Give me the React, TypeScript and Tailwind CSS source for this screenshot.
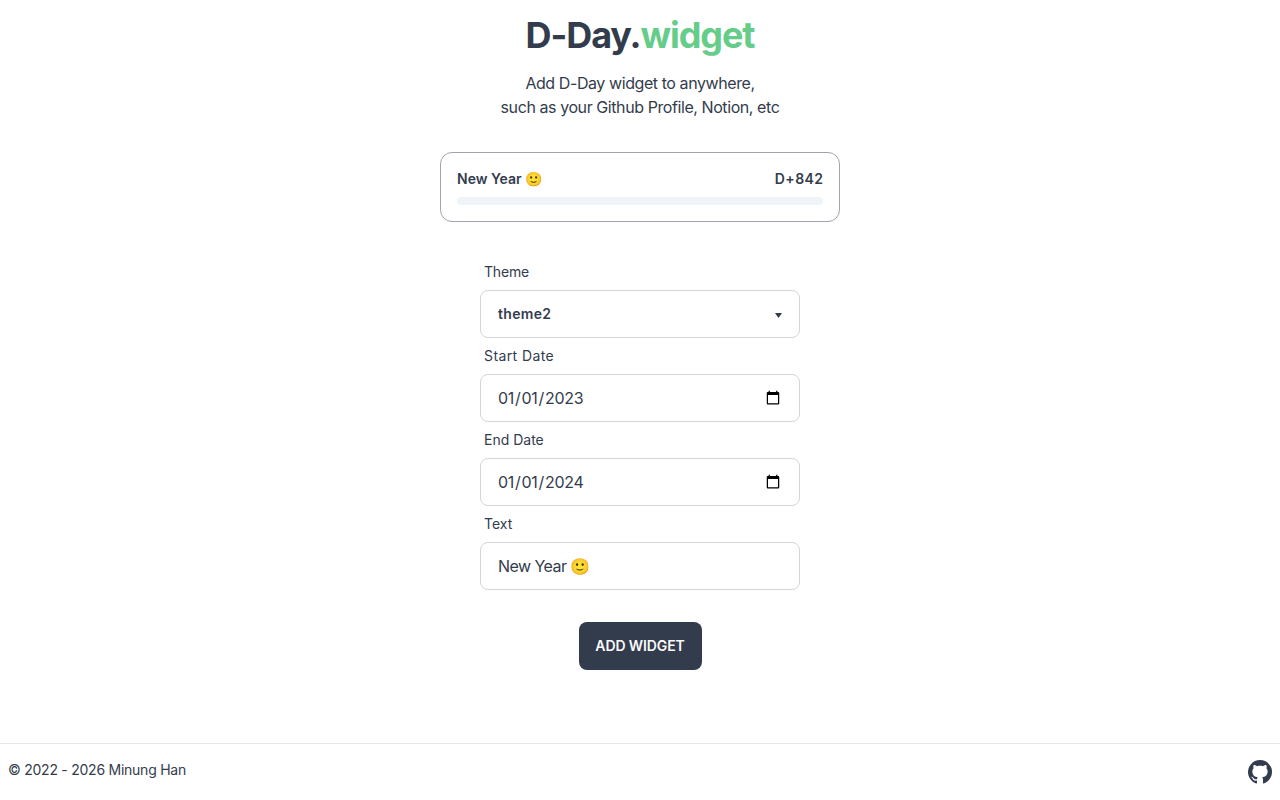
import React from 'react';

const fieldClass =
  'h-12 w-full rounded-lg border border-[#d4d5d8] bg-white pr-4 text-base text-[#333c4d] outline-none';

const Field: React.FC<{ label: string; labelClass?: string; children: React.ReactNode }> = ({
  label,
  labelClass = '',
  children,
}) => (
  <div className="flex flex-col">
    <label className={`px-1 py-2 text-sm leading-5 text-[#333c4d] ${labelClass}`}>{label}</label>
    {children}
  </div>
);

const App: React.FC = () => {
  return (
    <div className="flex h-screen flex-col bg-white font-['Inter','Noto_Color_Emoji',sans-serif] text-[#333c4d]">
      <main className="flex flex-1 flex-col items-center pt-[15px]">
        <h1 className="text-4xl font-bold leading-10 tracking-[-1.08px]">
          D-Day.<span className="text-[#66cc8a]">widget</span>
        </h1>
        <p className="mt-4 text-center text-base leading-6 tracking-[-0.42px]">
          Add D-Day widget to anywhere,
          <br />
          such as your Github Profile, Notion, etc
        </p>

        <div className="mt-[33px] flex h-[70px] w-[400px] flex-col rounded-xl border border-[#a0a3b1] px-4 pt-4">
          <div className="flex items-center justify-between text-sm font-semibold leading-5">
            <span>New Year 🙂</span>
            <span className="-mr-[0.4px] tracking-[0.4px]">D+842</span>
          </div>
          <div className="mt-2 h-2 w-full rounded-full bg-[#eff4f9]" />
        </div>

        <form className="mt-8 flex w-80 flex-col">
          <Field label="Theme" labelClass="tracking-[-0.2px]">
            <div className="relative">
              <select
                defaultValue="theme2"
                className={`${fieldClass} appearance-none pl-[17px] text-sm font-semibold tracking-[0.3px]`}
              >
                <option value="theme1">theme1</option>
                <option value="theme2">theme2</option>
              </select>
              <svg
                viewBox="0 0 7 5"
                className="pointer-events-none absolute right-[18px] top-[23px] h-[5px] w-[7px] text-[#333c4d]"
              >
                <path d="M0 0h7L3.5 5z" fill="currentColor" />
              </svg>
            </div>
          </Field>
          <Field label="Start Date" labelClass="tracking-[0.4px]">
            <input type="date" defaultValue="2023-01-01" className={`${fieldClass} pl-4 tracking-[-0.3px]`} />
          </Field>
          <Field label="End Date">
            <input type="date" defaultValue="2024-01-01" className={`${fieldClass} pl-4 tracking-[-0.3px]`} />
          </Field>
          <Field label="Text">
            <input type="text" defaultValue="New Year 🙂" className={`${fieldClass} pl-[17px] tracking-[-0.55px]`} />
          </Field>
          <button
            type="button"
            className="mx-auto mt-8 h-12 w-[123px] rounded-lg bg-[#333c4d] text-sm font-semibold uppercase tracking-[-0.1px] text-[#f9fafb]"
          >
            Add Widget
          </button>
        </form>
      </main>

      <footer className="flex items-start justify-between border-t border-[#e5e6e7] px-2 py-4 text-sm leading-5">
        <span className="tracking-[-0.25px]">© 2022 - 2026 Minung Han</span>
        <a href="#" className="text-[#333c4d]">
          <svg viewBox="0 0 24 24" className="h-6 w-6" fill="currentColor">
            <path d="M12 0c-6.626 0-12 5.373-12 12 0 5.302 3.438 9.8 8.207 11.385.6.111.793-.261.793-.577v-2.234c-3.338.726-4.033-1.416-4.033-1.416-.546-1.387-1.333-1.756-1.333-1.756-1.089-.745.083-.729.083-.729 1.205.084 1.839 1.237 1.839 1.237 1.07 1.834 2.807 1.304 3.492.997.107-.775.418-1.305.762-1.604-2.665-.305-5.467-1.334-5.467-5.931 0-1.311.469-2.381 1.236-3.221-.124-.303-.535-1.524.117-3.176 0 0 1.008-.322 3.301 1.23.957-.266 1.983-.399 3.003-.404 1.02.005 2.047.138 3.006.404 2.291-1.552 3.297-1.23 3.297-1.23.653 1.653.242 2.874.118 3.176.77.84 1.235 1.911 1.235 3.221 0 4.609-2.807 5.624-5.479 5.921.43.372.823 1.102.823 2.222v3.293c0 .319.192.694.801.576 4.765-1.589 8.199-6.086 8.199-11.386 0-6.627-5.373-12-12-12z" />
          </svg>
        </a>
      </footer>
    </div>
  );
};

export default App;
